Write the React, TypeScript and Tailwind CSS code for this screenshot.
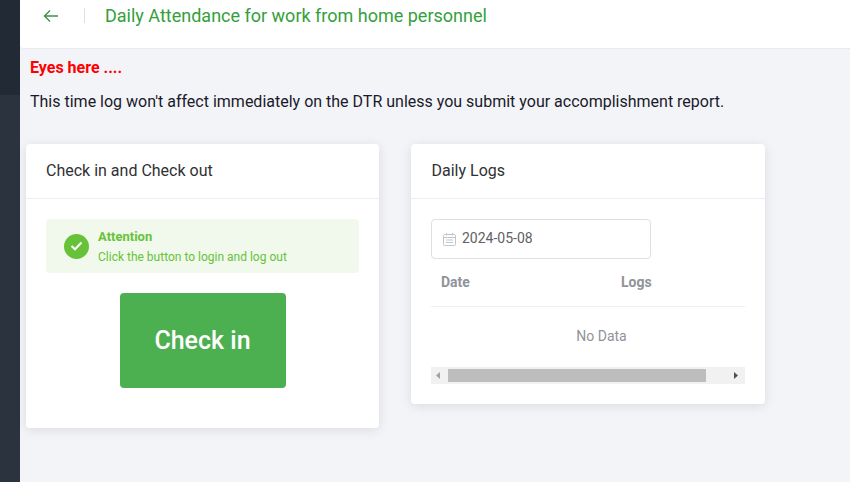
export default function App() {
  return (
    <div className="flex h-[482px] w-[850px] overflow-hidden bg-[#f3f4f8] font-['Roboto',sans-serif]">
      <aside className="flex w-5 shrink-0 flex-col bg-[#2b333e]">
        <div className="h-[95px] bg-[#222b35]" />
      </aside>
      <main className="min-w-0 flex-1">
        <header className="flex h-[49px] items-center rounded-bl border-b border-[#e8eaf0] bg-white pb-[17px] pl-[23px]">
          <svg width="16" height="14" viewBox="0 0 16 14" fill="none" stroke="#3f8f45" strokeWidth="1.3" className="shrink-0">
            <path d="M15 7H1.5M7 1.5 1.5 7 7 12.5" />
          </svg>
          <span className="ml-[25px] mr-5 h-[15px] w-px bg-[#dcdfe6]" />
          <h1 className="text-lg leading-6 font-normal text-[#34a03c]">Daily Attendance for work from home personnel</h1>
        </header>
        <div className="pt-[9px] pl-2.5">
          <p className="text-base leading-5 font-bold text-[#ff0000]">Eyes here ....</p>
          <p className="mt-3 text-base leading-6 text-[#1a1a2a]">This time log won't affect immediately on the DTR unless you submit your accomplishment report.</p>
        </div>
        <div className="mt-[30px] ml-1.5 flex items-start gap-8">
          <section className="w-[353px] rounded bg-white shadow-[0_2px_12px_rgba(0,0,0,0.1)]">
            <div className="flex h-[55px] items-center border-b border-[#ebeef5] px-5 text-base text-[#303133]">Check in and Check out</div>
            <div className="flex flex-col px-5 pt-5 pb-10">
              <div className="flex h-[54px] items-center gap-[9px] rounded bg-[#f0f9eb] px-[18px] pt-[2px]">
                <span className="-mt-[2px] flex h-[25px] w-[25px] shrink-0 items-center justify-center rounded-full bg-[#67c23a]">
                  <svg width="13" height="10" viewBox="0 0 13 10" fill="none" stroke="white" strokeWidth="2">
                    <path d="M1.5 5 5 8.3 11.5 1.5" />
                  </svg>
                </span>
                <div className="text-[#67c23a]">
                  <p className="text-[13px] leading-[18px] font-bold">Attention</p>
                  <p className="mt-[2px] text-xs leading-[18px]">Click the button to login and log out</p>
                </div>
              </div>
              <button className="mx-auto mt-5 h-[95px] w-[166px] rounded bg-[#4caf50] text-[25px] font-medium text-white">Check in</button>
            </div>
          </section>
          <section className="w-[354px] rounded bg-white shadow-[0_2px_12px_rgba(0,0,0,0.1)]">
            <div className="flex h-[55px] items-center border-b border-[#ebeef5] pl-[20.5px] text-base text-[#303133]">Daily Logs</div>
            <div className="px-5 pt-5 pb-5">
              <div className="flex h-10 w-[220px] items-center gap-[6px] rounded border border-[#dcdfe6] pb-[2px] pl-[11px]">
                <svg width="13" height="13" viewBox="0 0 13 13" fill="none" stroke="#c0c4cc" strokeWidth="1" className="mt-[2px]">
                  <rect x="0.5" y="1.5" width="12" height="11" rx="1" />
                  <path d="M0.5 4.5h12M3.5 0v2.5M9.5 0v2.5M3 7h7M3 9.5h7" />
                </svg>
                <span className="text-sm text-[#606266]">2024-05-08</span>
              </div>
              <div className="flex h-12 items-center border-b border-[#ebeef5] pb-[2px] text-sm font-bold text-[#909399]">
                <span className="w-[180px] pl-2.5">Date</span>
                <span className="pl-2.5">Logs</span>
              </div>
              <div className="flex h-[60px] items-center justify-center pb-[2px] pl-[27px] text-sm text-[#909399]">No Data</div>
              <div className="flex h-[17px] items-center bg-[#f1f1f1]">
                <svg width="17" height="17" viewBox="0 0 17 17" className="shrink-0">
                  <path d="M5 8.5 9 5v7z" fill="#a3a3a3" />
                </svg>
                <div className="h-[13px] w-[258px] bg-[#bdbdbd]" />
                <div className="flex-1" />
                <svg width="17" height="17" viewBox="0 0 17 17" className="shrink-0">
                  <path d="M6 5l4 3.5L6 12z" fill="#505050" />
                </svg>
              </div>
            </div>
          </section>
        </div>
      </main>
    </div>
  );
}
